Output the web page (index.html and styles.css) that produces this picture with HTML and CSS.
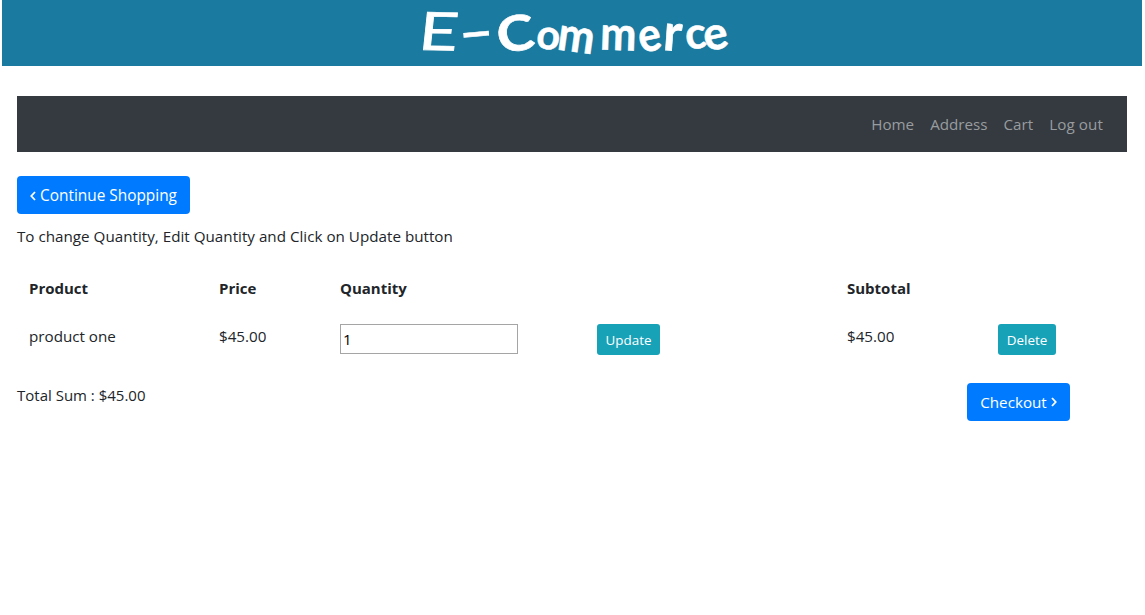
FILE: index.html
```
<!DOCTYPE html>
<html lang="en">
<head>
<meta charset="utf-8">
<title>Shopping Cart</title>
<link rel="stylesheet" href="styles.css">
</head>
<body>
<header class="banner">
  <h1 class="brand"><span class="l-e">E</span><span class="l-dash">-</span><span class="l-c">C</span><span class="l-o">o</span><span class="l-m">m</span><span class="l-m2">m</span><span class="l-e2">e</span><span class="l-r">r</span><span class="l-c2">c</span><span class="l-e3">e</span></h1>
</header>
<main class="page">
  <nav class="navbar">
    <a class="nav-link">Home</a>
    <a class="nav-link">Address</a>
    <a class="nav-link">Cart</a>
    <a class="nav-link">Log out</a>
  </nav>
  <a class="btn btn-continue"><svg class="chevron" viewBox="0 0 6 10"><path d="M5 1 1.3 5 5 9"/></svg>Continue Shopping</a>
  <p class="hint">To change Quantity, Edit Quantity and Click on Update button</p>
  <table class="cart">
    <colgroup><col class="c-product"><col class="c-price"><col class="c-quantity"><col class="c-update"><col class="c-subtotal"><col></colgroup>
    <thead>
      <tr><th>Product</th><th>Price</th><th>Quantity</th><th></th><th>Subtotal</th><th></th></tr>
    </thead>
    <tbody>
      <tr>
        <td>product one</td>
        <td>$45.00</td>
        <td><input class="quantity" type="text" value="1"></td>
        <td><button class="btn-sm btn-update">Update</button></td>
        <td>$45.00</td>
        <td><button class="btn-sm btn-delete">Delete</button></td>
      </tr>
    </tbody>
  </table>
  <div class="summary">
    <span class="total">Total Sum : $45.00</span>
    <a class="btn btn-checkout">Checkout<svg class="chevron" viewBox="0 0 6 10"><path d="M1 1 4.7 5 1 9"/></svg></a>
  </div>
</main>
</body>
</html>
```
FILE: styles.css
```
* { box-sizing: border-box; }
body {
  margin: 0;
  background: #fff;
  color: #212529;
  font: 15.2px/24px "Open Sans", "Noto Sans", sans-serif;
}
.banner {
  height: 66px;
  margin: 0 3px 0 2px;
  padding-left: 416px;
  background: #1a7aa0;
}
.brand {
  display: flex;
  margin: 0;
  color: #fff;
  font: 700 47px/66px Lato, sans-serif;
  -webkit-text-stroke: .6px #fff;
}
.brand span { display: block; text-align: center; }
.l-e { width: 42px; transform: translateY(-3px) rotate(1deg) skewX(-5deg) scale(1.45, 1.12); font-weight: 400; }
.l-dash { width: 32px; transform: translateY(-2px) rotate(-5deg) scale(2, .85); }
.l-c { width: 44px; transform: translate(1px, -1px) rotate(-8deg) scale(1.2, 1.04); }
.l-o { width: 19px; transform: rotate(8deg) scale(.88); }
.l-m { width: 44px; transform: translateY(1px) rotate(8deg) scaleX(.93); }
.l-m2 { width: 36px; transform: translateY(-1px) rotate(2deg) scaleX(.92); }
.l-e2 { width: 27px; transform: rotate(-12deg) scaleX(.9); }
.l-r { width: 22px; transform: translateY(-2px) rotate(4deg) scale(1.05, 1.1); }
.l-c2 { width: 18px; transform: translateY(-1px) rotate(-6deg) scale(.93); }
.l-e3 { width: 25px; transform: translateY(-1px) rotate(-12deg) scale(.97); }

.page { padding: 30px 18px 0 17px; }
.navbar {
  display: flex;
  justify-content: flex-end;
  align-items: center;
  gap: 16px;
  height: 56px;
  margin-bottom: 24px;
  padding-right: 24px;
  background: #343a40;
  color: #999c9f;
}
.nav-link:last-child { letter-spacing: .1px; }

.btn {
  display: flex;
  align-items: center;
  justify-content: center;
  gap: 4px;
  height: 38px;
  padding-top: 1px;
  border-radius: 4px;
  background: #007bff;
  color: #fff;
  font-size: 15.4px;
}
.btn-continue { width: 173px; }
.btn-checkout { width: 103px; margin-right: 57px; padding-top: 0; font-size: 15.2px; }
.chevron {
  width: 6px;
  height: 10px;
  fill: none;
  stroke: #fff;
  stroke-width: 1.8;
}
.hint { margin: 10px 0 16px; letter-spacing: .01px; }

.cart {
  width: 100%;
  table-layout: fixed;
  border-collapse: collapse;
}
.c-product { width: 190px; }
.c-price { width: 121px; }
.c-quantity { width: 257px; }
.c-update { width: 250px; }
.c-subtotal { width: 151px; }
.cart th, .cart td {
  height: 48px;
  padding: 12px 0 0 12px;
  text-align: left;
  vertical-align: top;
}
.cart th { font-size: 15px; }
.cart td { height: 59px; }
.quantity {
  display: block;
  width: 178px;
  height: 30px;
  padding: 2px;
  border: 1px solid #a5a5a5;
  background: #fff;
  color: #000;
  font: inherit;
}
.btn-sm {
  display: block;
  height: 31px;
  padding: 1px 0 0;
  border: 0;
  border-radius: 3px;
  background: #17a2b8;
  color: #fff;
  font: 13.4px/21px "Open Sans", "Noto Sans", sans-serif;
}
.btn-update { width: 63px; }
.btn-delete { width: 58px; }

.summary {
  display: flex;
  justify-content: space-between;
  align-items: flex-start;
  padding-top: 12px;
}
.total { font-size: 15px; }
```
